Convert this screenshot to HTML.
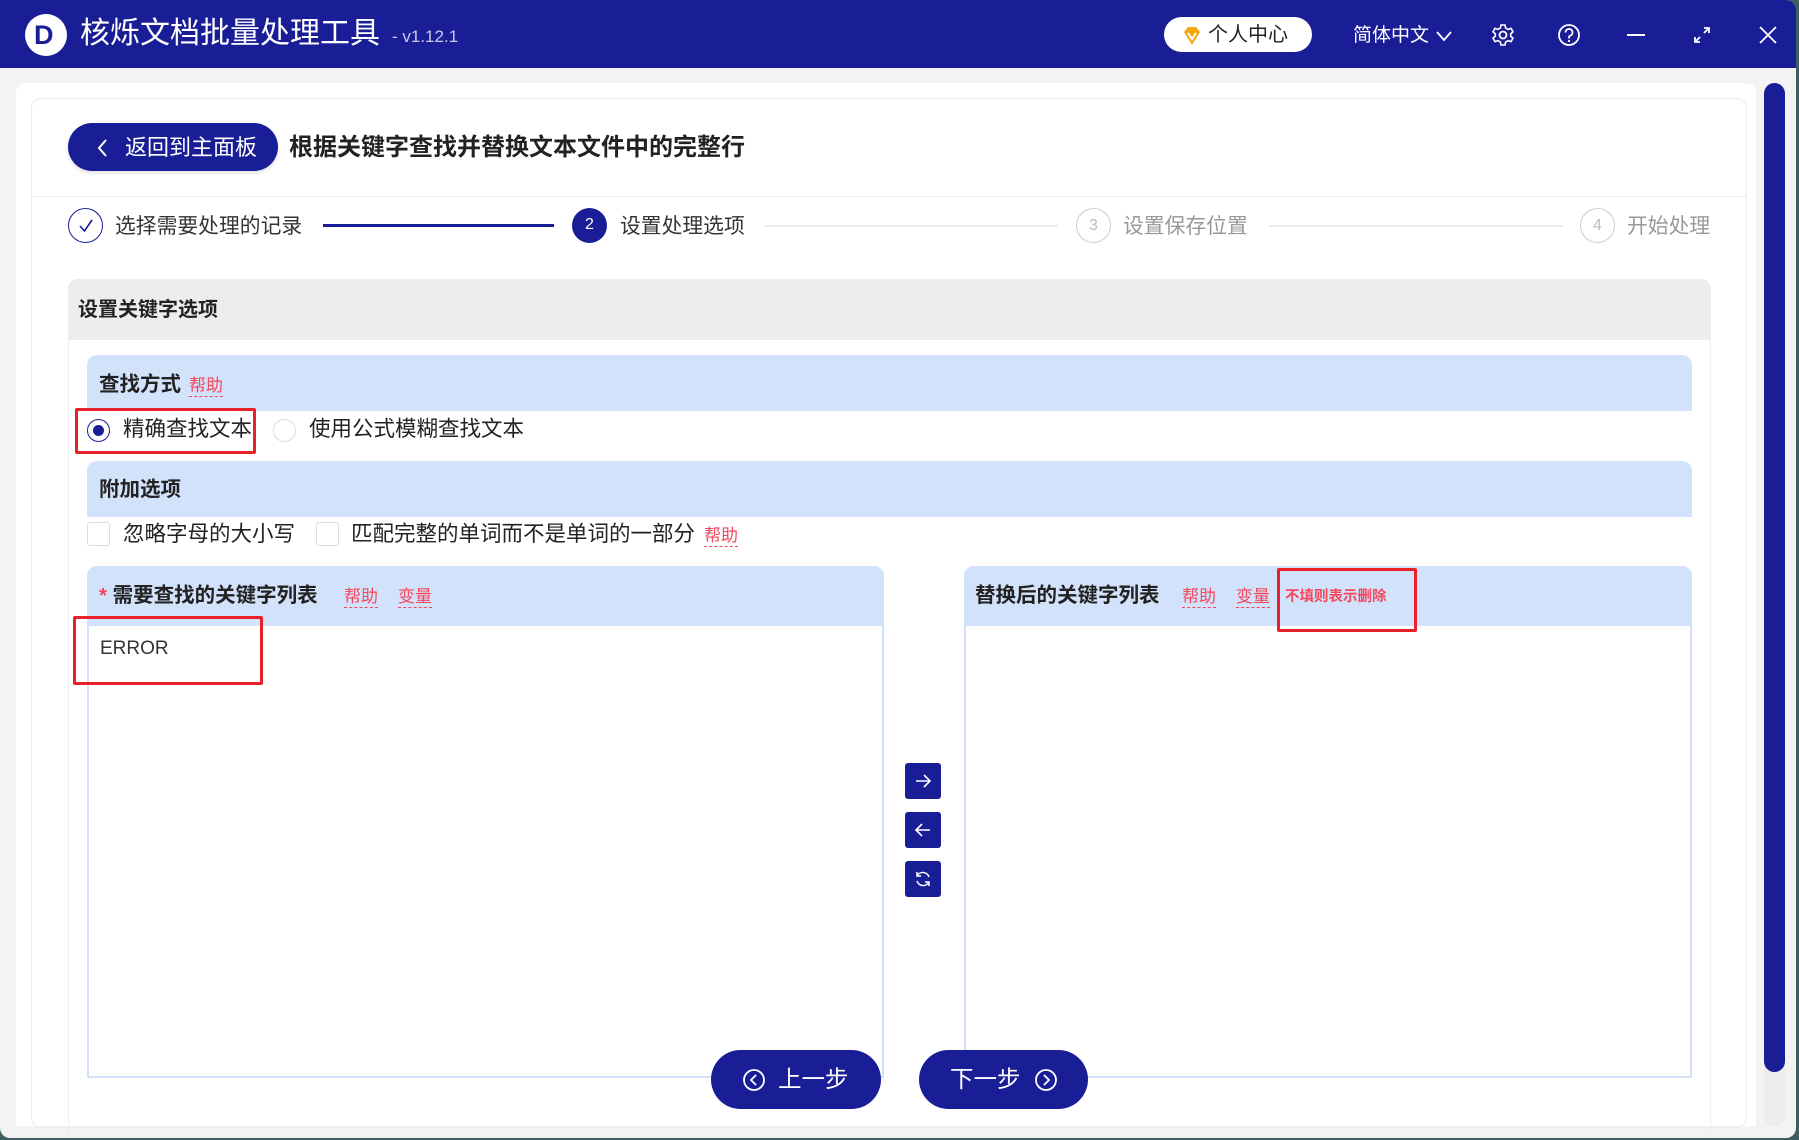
<!DOCTYPE html>
<html><head><meta charset="utf-8"><style>
*{margin:0;padding:0;box-sizing:border-box}
body{width:1799px;height:1140px;overflow:hidden;background:#3d5d63;font-family:"Liberation Sans","Noto Sans CJK SC",sans-serif;position:relative}
.a{position:absolute}
.win{left:0;top:0;width:1796px;height:1138px;background:#f3f3f3;border-radius:0 10px 10px 10px;overflow:hidden}
.tb{left:0;top:0;width:1796px;height:68px;background:#1a1e96}
.t{white-space:nowrap;line-height:1}
.help{color:#f5475b;border-bottom:1.5px dashed #f5475b;padding-bottom:2px}
.hdr{background:#d3e2fb;border-radius:10px 10px 0 0}
.btn{background:#1a1e96;color:#fff;border-radius:24px}
.sq{background:#1a1e96;border-radius:3px;width:36px;height:36px}
.circ{border-radius:50%;width:35px;height:35px;text-align:center;line-height:33px;font-size:16px}
</style></head><body>
<div class="a win">
<div class="a tb"></div>
<div class="a" style="left:25px;top:14px;width:42px;height:42px;border-radius:50%;background:#fff"></div>
<div class="a t" style="left:34px;top:22px;font-size:27px;font-weight:bold;color:#1a1e96">D</div>
<div class="a t" style="left:80px;top:19px;font-size:30px;color:#fff">核烁文档批量处理工具</div>
<div class="a t" style="left:392px;top:28px;font-size:17px;color:#c8cbe8">- v1.12.1</div>
<div class="a" style="left:1164px;top:17px;width:148px;height:35px;border-radius:18px;background:#fff"></div>
<svg class="a" style="left:1181px;top:25px" width="22" height="22" viewBox="0 0 22 22"><path d="M3 7 L7 2 H15 L19 7 L11 20 Z" fill="#f6a70f"/><path d="M7 8 L11 14 L15 8" stroke="#fff" stroke-width="2" fill="none"/></svg>
<div class="a t" style="left:1208px;top:25px;font-size:20px;color:#222">个人中心</div>
<div class="a t" style="left:1353px;top:26px;font-size:19px;color:#fff">简体中文</div>
<svg class="a" style="left:1436px;top:30px" width="16" height="12"><path d="M1 2 L8 10 L15 2" stroke="#fff" stroke-width="1.8" fill="none"/></svg>
<svg class="a" style="left:1491px;top:23px" width="24" height="24" viewBox="0 0 24 24"><circle cx="12" cy="12" r="3.5" stroke="#fff" stroke-width="1.8" fill="none"/><path d="M10 2h4l.6 3 2.5 1.4 2.9-1 2 3.4-2.3 2v2.4l2.3 2-2 3.4-2.9-1-2.5 1.4-.6 3h-4l-.6-3-2.5-1.4-2.9 1-2-3.4 2.3-2v-2.4l-2.3-2 2-3.4 2.9 1L9.4 5z" stroke="#fff" stroke-width="1.6" fill="none"/></svg>
<svg class="a" style="left:1557px;top:23px" width="24" height="24"><circle cx="12" cy="12" r="10" stroke="#fff" stroke-width="1.8" fill="none"/><path d="M8.5 9.5a3.5 3.5 0 1 1 4.5 3.3c-.8.3-1 .9-1 1.7v1" stroke="#fff" stroke-width="1.8" fill="none"/><circle cx="12" cy="18" r="1.1" fill="#fff"/></svg>
<div class="a" style="left:1627px;top:34px;width:18px;height:2px;background:#fff"></div>
<svg class="a" style="left:1692px;top:25px" width="20" height="20"><path d="M12 3h5v5M17 3l-5 5M8 17H3v-5M3 17l5-5" stroke="#fff" stroke-width="1.8" fill="none"/></svg>
<svg class="a" style="left:1758px;top:25px" width="20" height="20"><path d="M2 2L18 18M18 2L2 18" stroke="#fff" stroke-width="1.8"/></svg>

<div class="a" style="left:16px;top:83px;width:1740px;height:1043px;background:#fff;border-radius:10px 10px 0 0"></div>
<div class="a" style="left:31px;top:98px;width:1716px;height:1030px;border:1px solid #ececec;border-radius:10px"></div>
<div class="a" style="left:32px;top:196px;width:1714px;height:1px;background:#ececec"></div>
<div class="a" style="left:1764px;top:83px;width:21px;height:1043px;background:#ececec;border-radius:11px"></div>
<div class="a" style="left:1764px;top:83px;width:21px;height:989px;background:#1a1e96;border-radius:11px"></div>

<div class="a btn" style="left:68px;top:123px;width:210px;height:48px;box-shadow:0 2px 4px rgba(0,0,0,.12)"></div>
<svg class="a" style="left:96px;top:138px" width="12" height="20"><path d="M10 2L3 10L10 18" stroke="#fff" stroke-width="2" fill="none"/></svg>
<div class="a t" style="left:125px;top:137px;font-size:22px;color:#fff">返回到主面板</div>
<div class="a t" style="left:289px;top:136px;font-size:24px;font-weight:bold;color:#222">根据关键字查找并替换文本文件中的完整行</div>

<div class="a circ" style="left:68px;top:208px;border:1.5px solid #1a1e96"></div>
<svg class="a" style="left:77px;top:217px" width="18" height="18"><path d="M3 9L7.5 14L15 3" stroke="#1a1e96" stroke-width="1.6" fill="none"/></svg>
<div class="a t" style="left:115px;top:217px;font-size:20.8px;color:#333">选择需要处理的记录</div>
<div class="a" style="left:323px;top:224px;width:231px;height:3px;background:#1a1e96"></div>
<div class="a circ" style="left:572px;top:208px;background:#1a1e96;color:#fff">2</div>
<div class="a t" style="left:620px;top:217px;font-size:20.8px;color:#333">设置处理选项</div>
<div class="a" style="left:764px;top:225px;width:294px;height:2px;background:#ececec"></div>
<div class="a circ" style="left:1076px;top:208px;border:1.5px solid #ccc;color:#bbb">3</div>
<div class="a t" style="left:1123px;top:217px;font-size:20.8px;color:#999">设置保存位置</div>
<div class="a" style="left:1269px;top:225px;width:294px;height:2px;background:#ececec"></div>
<div class="a circ" style="left:1580px;top:208px;border:1.5px solid #ccc;color:#bbb">4</div>
<div class="a t" style="left:1627px;top:217px;font-size:20.8px;color:#999">开始处理</div>

<div class="a" style="left:68px;top:279px;width:1643px;height:860px;border:1px solid #eee;border-radius:10px 10px 0 0"></div>
<div class="a" style="left:68px;top:279px;width:1643px;height:61px;background:#ededed;border-radius:10px 10px 0 0"></div>
<div class="a t" style="left:78px;top:300px;font-size:20px;font-weight:bold;color:#222">设置关键字选项</div>

<div class="a hdr" style="left:87px;top:355px;width:1605px;height:56px"></div>
<div class="a t" style="left:99px;top:375px;font-size:20.5px;font-weight:bold;color:#222">查找方式</div>
<div class="a t help" style="left:189px;top:377px;font-size:17px">帮助</div>
<div class="a" style="left:87px;top:419px;width:23px;height:23px;border-radius:50%;border:1.5px solid #1a1e96"></div>
<div class="a" style="left:93px;top:425px;width:11px;height:11px;border-radius:50%;background:#1a1e96"></div>
<div class="a t" style="left:123px;top:419px;font-size:21.5px;color:#222">精确查找文本</div>
<div class="a" style="left:273px;top:419px;width:23px;height:23px;border-radius:50%;border:1.5px solid #ddd"></div>
<div class="a t" style="left:309px;top:419px;font-size:21.5px;color:#222">使用公式模糊查找文本</div>
<div class="a" style="left:75px;top:408px;width:181px;height:46px;border:3px solid #e8202a;border-radius:2px"></div>

<div class="a hdr" style="left:87px;top:461px;width:1605px;height:56px"></div>
<div class="a t" style="left:99px;top:480px;font-size:20.5px;font-weight:bold;color:#222">附加选项</div>
<div class="a" style="left:87px;top:522px;width:23px;height:24px;border:1px solid #ddd;border-radius:3px"></div>
<div class="a t" style="left:123px;top:524px;font-size:21.5px;color:#222">忽略字母的大小写</div>
<div class="a" style="left:316px;top:522px;width:23px;height:24px;border:1px solid #ddd;border-radius:3px"></div>
<div class="a t" style="left:351px;top:524px;font-size:21.5px;color:#222">匹配完整的单词而不是单词的一部分</div>
<div class="a t help" style="left:704px;top:527px;font-size:17px">帮助</div>

<div class="a" style="left:87px;top:566px;width:797px;height:512px;border:2px solid #d3e2fb;border-radius:10px 10px 0 0"></div>
<div class="a hdr" style="left:87px;top:566px;width:797px;height:60px"></div>
<div class="a t" style="left:99px;top:586px;font-size:20.5px;font-weight:bold;color:#222"><span style="color:#f5475b">*</span> 需要查找的关键字列表</div>
<div class="a t help" style="left:344px;top:588px;font-size:17px">帮助</div>
<div class="a t help" style="left:398px;top:588px;font-size:17px">变量</div>
<div class="a t" style="left:100px;top:639px;font-size:19px;color:#333">ERROR</div>
<div class="a" style="left:73px;top:616px;width:190px;height:69px;border:3px solid #e8202a;border-radius:2px"></div>

<div class="a" style="left:964px;top:566px;width:728px;height:512px;border:2px solid #d3e2fb;border-radius:10px 10px 0 0"></div>
<div class="a hdr" style="left:964px;top:566px;width:728px;height:60px"></div>
<div class="a t" style="left:975px;top:586px;font-size:20.5px;font-weight:bold;color:#222">替换后的关键字列表</div>
<div class="a t help" style="left:1182px;top:588px;font-size:17px">帮助</div>
<div class="a t help" style="left:1236px;top:588px;font-size:17px">变量</div>
<div class="a t" style="left:1285px;top:590px;font-size:14.5px;font-weight:bold;color:#f5475b">不填则表示删除</div>
<div class="a" style="left:1277px;top:568px;width:140px;height:64px;border:3px solid #e8202a;border-radius:2px"></div>

<div class="a sq" style="left:905px;top:763px"></div>
<svg class="a" style="left:913px;top:771px" width="20" height="20"><path d="M3 10H17M11 4L17 10L11 16" stroke="#fff" stroke-width="1.6" fill="none"/></svg>
<div class="a sq" style="left:905px;top:812px"></div>
<svg class="a" style="left:913px;top:820px" width="20" height="20"><path d="M17 10H3M9 4L3 10L9 16" stroke="#fff" stroke-width="1.6" fill="none"/></svg>
<div class="a sq" style="left:905px;top:861px"></div>
<svg class="a" style="left:913px;top:869px" width="20" height="20"><path d="M16 8A6.5 6.5 0 0 0 4 7M4 12A6.5 6.5 0 0 0 16 13M4 3V7H8M16 17V13H12" stroke="#fff" stroke-width="1.5" fill="none"/></svg>

<div class="a btn" style="left:711px;top:1050px;width:170px;height:59px;border-radius:30px"></div>
<svg class="a" style="left:742px;top:1068px" width="24" height="24"><circle cx="12" cy="12" r="10" stroke="#fff" stroke-width="1.8" fill="none"/><path d="M14 7L9 12L14 17" stroke="#fff" stroke-width="1.8" fill="none"/></svg>
<div class="a t" style="left:778px;top:1068px;font-size:23.5px;color:#fff">上一步</div>
<div class="a btn" style="left:919px;top:1050px;width:169px;height:59px;border-radius:30px"></div>
<div class="a t" style="left:950px;top:1068px;font-size:23.5px;color:#fff">下一步</div>
<svg class="a" style="left:1034px;top:1068px" width="24" height="24"><circle cx="12" cy="12" r="10" stroke="#fff" stroke-width="1.8" fill="none"/><path d="M10 7L15 12L10 17" stroke="#fff" stroke-width="1.8" fill="none"/></svg>
</div>
</body></html>
